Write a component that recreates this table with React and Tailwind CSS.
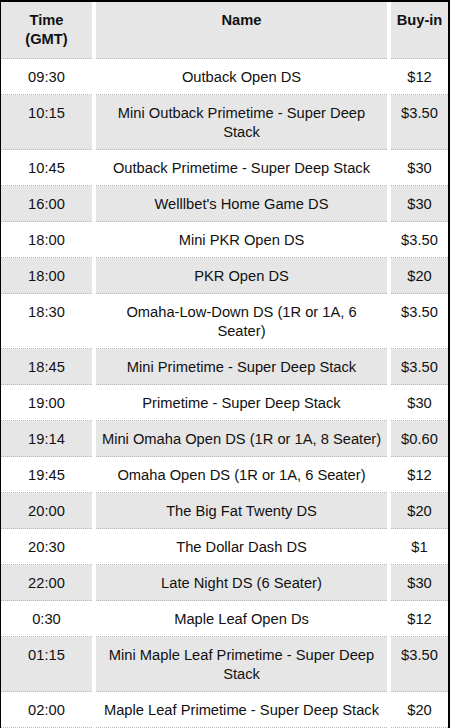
import React from "react";

const rows = [
  ["09:30", ["Outback Open DS"], "$12"],
  ["10:15", ["Mini Outback Primetime - Super Deep", "Stack"], "$3.50"],
  ["10:45", ["Outback Primetime - Super Deep Stack"], "$30"],
  ["16:00", ["Welllbet's Home Game DS"], "$30"],
  ["18:00", ["Mini PKR Open DS"], "$3.50"],
  ["18:00", ["PKR Open DS"], "$20"],
  ["18:30", ["Omaha-Low-Down DS (1R or 1A, 6", "Seater)"], "$3.50"],
  ["18:45", ["Mini Primetime - Super Deep Stack"], "$3.50"],
  ["19:00", ["Primetime - Super Deep Stack"], "$30"],
  ["19:14", ["Mini Omaha Open DS (1R or 1A, 8 Seater)"], "$0.60"],
  ["19:45", ["Omaha Open DS (1R or 1A, 6 Seater)"], "$12"],
  ["20:00", ["The Big Fat Twenty DS"], "$20"],
  ["20:30", ["The Dollar Dash DS"], "$1"],
  ["22:00", ["Late Night DS (6 Seater)"], "$30"],
  ["0:30", ["Maple Leaf Open Ds"], "$12"],
  ["01:15", ["Mini Maple Leaf Primetime - Super Deep", "Stack"], "$3.50"],
  ["02:00", ["Maple Leaf Primetime - Super Deep Stack"], "$20"],
];

function Cell({ children, gray, bold }) {
  return (
    <div
      className={
        "px-1 pt-[9px] text-center whitespace-nowrap border-b border-dotted border-[#b8b8b8] " +
        (gray ? "bg-[#e6e6e6] " : "bg-white ") +
        (bold ? "font-bold pb-[9px]" : "pb-[7px]")
      }
    >
      {children}
    </div>
  );
}

export default function App() {
  return (
    <div
      className="w-[450px] h-[728px] overflow-hidden bg-white border-l border-t-2 border-r-2 border-black text-[14.7px] leading-[19px] text-[#111]"
      style={{ fontFamily: '"Liberation Sans", Arial, sans-serif' }}
    >
      <div className="grid grid-cols-[91px_291px_57px] gap-x-[4px]">
        <Cell gray bold>
          Time
          <br />
          (GMT)
        </Cell>
        <Cell gray bold>Name</Cell>
        <Cell gray bold>Buy-in</Cell>
        {rows.map(([t, name, b], i) => {
          const gray = i % 2 === 1;
          return (
            <React.Fragment key={i}>
              <Cell gray={gray}>{t}</Cell>
              <Cell gray={gray}>
                {name.map((l, j) => (
                  <div key={j}>{l}</div>
                ))}
              </Cell>
              <Cell gray={gray}>{b}</Cell>
            </React.Fragment>
          );
        })}
      </div>
    </div>
  );
}
